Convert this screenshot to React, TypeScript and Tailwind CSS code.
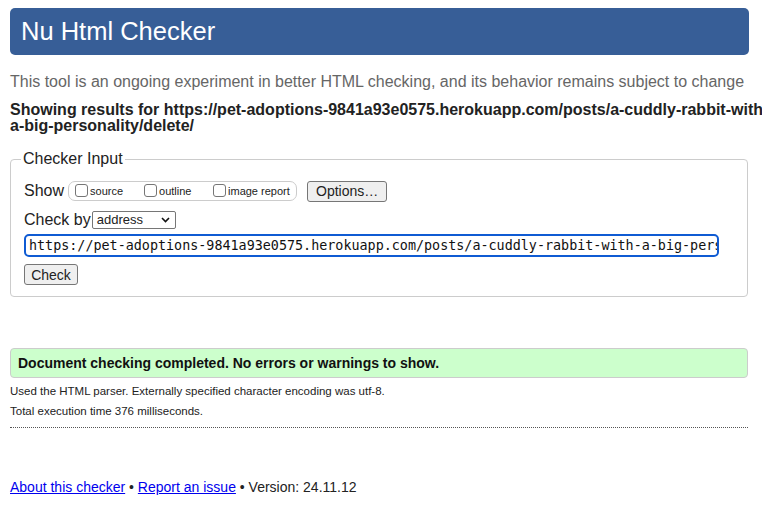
const Box = () => (
  <span className="inline-block w-[13px] h-[13px] border border-[#767676] rounded-[3px] bg-white mr-[2px] align-[-2px]" />
);

const App = () => {
  return (
    <div className="w-[762px] h-[514px] overflow-hidden bg-white text-[#222] font-['Liberation_Sans',Arial,sans-serif]">
      <div className="ml-[10px] mt-[8px] w-[739px] h-[47px] rounded-[5px] bg-[#375e97] px-[11px] flex items-center">
        <h1 className="text-white text-[25.5px] leading-none">Nu Html Checker</h1>
      </div>

      <p className="ml-[10px] mt-[15px] text-[16px] leading-[24px] text-[#666] whitespace-nowrap">
        This tool is an ongoing experiment in better HTML checking, and its behavior remains subject to change
      </p>

      <p className="ml-[10px] mt-[8px] text-[16px] leading-[16px] font-bold text-[#222] whitespace-nowrap">
        Showing results for https://pet-adoptions-9841a93e0575.herokuapp.com/posts/a-cuddly-rabbit-with-
        <br />
        a-big-personality/delete/
      </p>

      <fieldset className="ml-[10px] mt-[13px] w-[738px] h-[150px] border border-[#ccc] rounded-[4px] px-[13px] pt-[6px]">
        <legend className="px-[2px] ml-[-3px] text-[16px] text-[#222]">Checker Input</legend>

        <div className="flex items-center h-[22px] mt-[3px]">
          <span className="text-[16px]">Show</span>
          <span className="ml-[4px] flex items-center h-[20px] w-[229px] border border-[#ccc] rounded-[7px] px-[6px] text-[11px]">
            <label className="w-[69px]"><Box />source</label>
            <label className="w-[69px]"><Box />outline</label>
            <label><Box />image report</label>
          </span>
          <button className="ml-[10px] h-[21px] px-[8px] border border-[#767676] rounded-[3px] bg-[#efefef] text-[14px] leading-none">
            Options…
          </button>
        </div>

        <div className="flex items-center h-[22px] mt-[7px]">
          <span className="text-[16px]">Check by</span>
          <span className="ml-[1px] flex items-center justify-between h-[18px] w-[84px] border border-[#767676] rounded-[2px] bg-white pl-[4px] pr-[5px] text-[13px]">
            address
            <svg width="9" height="6" viewBox="0 0 9 6">
              <path d="M1 1 L4.5 4.5 L8 1" stroke="#111" strokeWidth="1.6" fill="none" />
            </svg>
          </span>
        </div>

        <input
          readOnly
          value="https://pet-adoptions-9841a93e0575.herokuapp.com/posts/a-cuddly-rabbit-with-a-big-personality/delete/"
          className="block mt-[3px] h-[23px] w-[695px] border-2 border-[#0f5bd3] rounded-[5px] pl-[3px] outline-none text-[13.4px] font-['DejaVu_Sans_Mono',monospace] text-[#111]"
        />

        <button className="mt-[7px] h-[21px] w-[54px] border border-[#767676] rounded-[3px] bg-[#efefef] text-[14px] leading-none">
          Check
        </button>
      </fieldset>

      <div className="ml-[10px] mt-[51px] w-[738px] h-[30px] border border-[#ccc] rounded-[4px] bg-[#ccffcc] flex items-center px-[7px]">
        <span className="text-[14px] font-bold text-[#111]">Document checking completed. No errors or warnings to show.</span>
      </div>

      <p className="ml-[10px] mt-[6px] text-[11.5px] leading-[14px] text-[#222]">
        Used the HTML parser. Externally specified character encoding was utf-8.
      </p>
      <p className="ml-[10px] mt-[6px] text-[11.5px] leading-[14px] text-[#222]">
        Total execution time 376 milliseconds.
      </p>
      <div className="ml-[10px] mt-[9px] w-[738px] border-t border-dotted border-[#555]" />

      <p className="ml-[10px] mt-[49px] text-[14px] text-[#222]">
        <a href="#" className="text-[#0000ee] underline">About this checker</a>
        {" • "}
        <a href="#" className="text-[#0000ee] underline">Report an issue</a>
        {" • Version: 24.11.12"}
      </p>
    </div>
  );
};

export default App;
